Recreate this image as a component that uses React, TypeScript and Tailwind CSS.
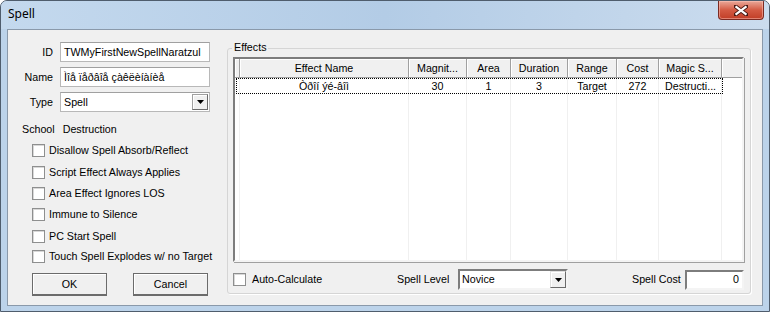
import React from "react";

const columns = [
  { w: "w-[5px]", head: "", cell: "", align: "justify-center" },
  { w: "w-[169px]", head: "Effect Name", cell: "Òðîí ýé-âîì", align: "justify-center" },
  { w: "w-[58px]", head: "Magnit...", cell: "30", align: "justify-center" },
  { w: "w-[44px]", head: "Area", cell: "1", align: "justify-center" },
  { w: "w-[57px]", head: "Duration", cell: "3", align: "justify-center" },
  { w: "w-[49px]", head: "Range", cell: "Target", align: "justify-center" },
  { w: "w-[42px]", head: "Cost", cell: "272", align: "justify-center" },
  { w: "w-[63px]", head: "Magic S...", cell: "Destructi...", align: "justify-start pl-[6px]" },
];

const flags = [
  { label: "Disallow Spell Absorb/Reflect", mt: "mt-[8px]" },
  { label: "Script Effect Always Applies", mt: "mt-[9px]" },
  { label: "Area Effect Ignores LOS", mt: "mt-[8px]" },
  { label: "Immune to Silence", mt: "mt-[8px]" },
  { label: "PC Start Spell", mt: "mt-[9px]" },
  { label: "Touch Spell Explodes w/ no Target", mt: "mt-[7px]" },
];

const Arrow = () => (
  <svg width="7" height="4" viewBox="0 0 7 4">
    <polygon points="0,0 7,0 3.5,4" fill="#000" />
  </svg>
);

const CheckBox = () => (
  <div className="w-[13px] h-[13px] shrink-0 bg-white border border-[#8e8f8f] shadow-[inset_1px_1px_0_#d8d8d8]" />
);

const Button = ({ label }: { label: string }) => (
  <div className="w-[75px] h-[23px] flex items-center justify-center bg-[#f0f0f0] border border-[#6b6b6b] border-b-2 shadow-[inset_1px_1px_0_#ffffff]">
    {label}
  </div>
);

const TextBox = ({ value }: { value: string }) => (
  <div className="w-[150px] h-[20px] flex items-center px-[3px] bg-white border border-[#b8b8b8] border-t-[#a0a0a0] whitespace-nowrap overflow-hidden">
    {value}
  </div>
);

const App = () => {
  return (
    <div className="w-[770px] h-[312px] flex flex-col overflow-hidden bg-[#bcd3ea] border border-[#4f5d6d] rounded-t-[7px] font-['Liberation_Sans',Arial,sans-serif] text-[10.7px] text-black">
      {/* title bar */}
      <div className="h-[28px] shrink-0 flex items-start justify-between bg-gradient-to-r from-[#c4d9ee] via-[#b3cce6] to-[#cbdcee]">
        <span className="pl-[7px] pt-[5px] font-['Noto_Sans',sans-serif] text-[12px] leading-[16px]">Spell</span>
        <div className="mr-[5px] w-[46px] h-[19px] flex items-center justify-center rounded-b-[4px] border border-t-0 border-[#7b2a22] bg-gradient-to-b from-[#e9a899] via-[#d45a43] to-[#c13d26] shadow-[inset_0_0_0_1px_rgba(255,200,190,0.5)]">
          <svg width="14" height="11" viewBox="0 0 14 11">
            <path
              d="M1 1 L13 10 M13 1 L1 10"
              stroke="#4a1a14"
              strokeWidth="4"
              strokeLinecap="square"
            />
            <path
              d="M1.5 1.3 L12.5 9.7 M12.5 1.3 L1.5 9.7"
              stroke="#ffffff"
              strokeWidth="2.2"
            />
          </svg>
        </div>
      </div>

      {/* client area */}
      <div className="flex-1 mx-[6px] mb-[5px] flex bg-[#f0f0f0] border border-[#8a99aa]">
        {/* left panel */}
        <div className="w-[219px] shrink-0 flex flex-col pt-[12px]">
          <div className="flex items-center">
            <span className="w-[45px] text-right">ID</span>
            <div className="ml-[7px]">
              <TextBox value="TWMyFirstNewSpellNaratzul" />
            </div>
          </div>
          <div className="flex items-center mt-[5px]">
            <span className="w-[45px] text-right">Name</span>
            <div className="ml-[7px]">
              <TextBox value="Ìîå ïåðâîå çàêëèíàíèå" />
            </div>
          </div>
          <div className="flex items-center mt-[5px]">
            <span className="w-[45px] text-right">Type</span>
            <div className="ml-[7px] w-[150px] h-[20px] flex items-center justify-between bg-white border border-[#b8b8b8] border-t-[#a0a0a0]">
              <span className="pl-[3px]">Spell</span>
              <div className="w-[16px] h-[16px] mr-[1px] flex items-center justify-center bg-[#f0f0f0] border border-[#a0a0a0] border-r-[#6b6b6b] border-b-[#6b6b6b] shadow-[inset_1px_1px_0_#fff]">
                <Arrow />
              </div>
            </div>
          </div>
          <div className="flex mt-[11px] pl-[14px] leading-[13px]">
            <span>School</span>
            <span className="ml-[8px]">Destruction</span>
          </div>
          {flags.map((f) => (
            <div key={f.label} className={`flex items-center pl-[24px] ${f.mt}`}>
              <CheckBox />
              <span className="ml-[4px] leading-[13px] whitespace-nowrap">{f.label}</span>
            </div>
          ))}
          <div className="flex mt-[10px] pl-[24px] gap-[26px]">
            <Button label="OK" />
            <Button label="Cancel" />
          </div>
        </div>

        {/* effects group */}
        <div className="mt-[18px] relative w-[524px] h-[246px] shrink-0 border border-[#d5d5d5] rounded-[3px] shadow-[1px_1px_0_#ffffff] pl-[5px] pt-[8px]">
          <span className="absolute -top-[8px] left-[4px] px-[2px] bg-[#f0f0f0] leading-[13px]">Effects</span>

          {/* list view */}
          <div className="w-[511px] h-[205px] flex flex-col bg-white border-2 border-t-[#7d7d7d] border-l-[#7d7d7d] border-r-[#f4f4f4] border-b-[#f4f4f4] shadow-[1px_1px_0_#a0a0a0]">
            <div className="flex h-[19px] shrink-0">
              {columns.map((c, i) => (
                <div
                  key={i}
                  className={`${c.w} h-full flex items-center justify-center whitespace-nowrap overflow-hidden bg-[#f0f0f0] border-r border-b border-[#a0a0a0] shadow-[inset_1px_1px_0_#ffffff]`}
                >
                  {c.head}
                </div>
              ))}
              <div className="flex-1 h-full bg-[#f0f0f0] border-b border-[#a0a0a0] shadow-[inset_1px_1px_0_#ffffff]" />
            </div>
            <div className="flex-1 relative flex">
              {columns.map((c, i) => (
                <div key={i} className={`${c.w} h-full border-r border-[#f0f0f0]`}>
                  <div className={`h-[16px] flex items-center whitespace-nowrap overflow-hidden ${c.align}`}>
                    {c.cell}
                  </div>
                </div>
              ))}
              <div className="absolute top-0 left-[1px] w-[487px] h-[16px] border border-dotted border-black" />
            </div>
          </div>

          {/* bottom row */}
          <div className="flex items-center mt-[7px] h-[21px]">
            <div className="w-[164px] flex items-center">
              <CheckBox />
              <span className="ml-[6px]">Auto-Calculate</span>
            </div>
            <span className="w-[61px]">Spell Level</span>
            <div className="w-[110px] h-[21px] flex items-center justify-between bg-white border-2 border-t-[#7d7d7d] border-l-[#7d7d7d] border-r-[#f4f4f4] border-b-[#f4f4f4]">
              <span className="pl-[2px]">Novice</span>
              <div className="w-[16px] h-[17px] flex items-center justify-center bg-[#f0f0f0] border border-[#e0e0e0] border-r-[#6b6b6b] border-b-[#6b6b6b] shadow-[inset_1px_1px_0_#fff]">
                <Arrow />
              </div>
            </div>
            <span className="ml-[64px] w-[53px]">Spell Cost</span>
            <div className="w-[59px] h-[20px] flex items-center justify-end pr-[3px] bg-white border-2 border-t-[#7d7d7d] border-l-[#7d7d7d] border-r-[#f4f4f4] border-b-[#f4f4f4]">
              0
            </div>
          </div>
        </div>
      </div>
    </div>
  );
};

export default App;
